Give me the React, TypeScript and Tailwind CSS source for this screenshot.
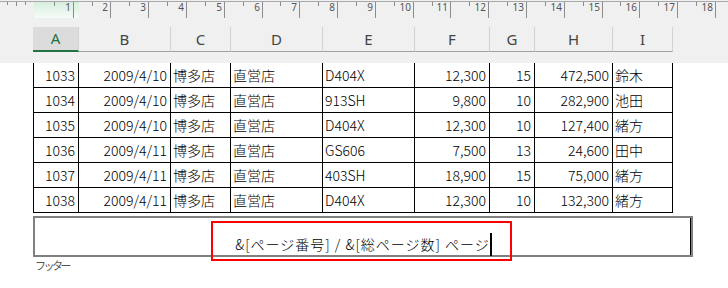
import React from 'react';

const heads = ['A', 'B', 'C', 'D', 'E', 'F', 'G', 'H', 'I'];
const headW = ['w-[46px]', 'w-[92px]', 'w-[60px]', 'w-[92px]', 'w-[92px]', 'w-[75px]', 'w-[45px]', 'w-[78px]', 'w-[60px]'];
const cellW = ['w-[45px]', 'w-[92px]', 'w-[60px]', 'w-[92px]', 'w-[92px]', 'w-[75px]', 'w-[45px]', 'w-[78px]', 'w-[60px]'];
const right = [true, true, false, false, false, true, true, true, false];

const rows = [
  ['1033', '2009/4/10', '博多店', '直営店', 'D404X', '12,300', '15', '472,500', '鈴木'],
  ['1034', '2009/4/10', '博多店', '直営店', '913SH', '9,800', '10', '282,900', '池田'],
  ['1035', '2009/4/10', '博多店', '直営店', 'D404X', '12,300', '10', '127,400', '緒方'],
  ['1036', '2009/4/11', '博多店', '直営店', 'GS606', '7,500', '13', '24,600', '田中'],
  ['1037', '2009/4/11', '博多店', '直営店', '403SH', '18,900', '15', '75,000', '緒方'],
  ['1038', '2009/4/11', '博多店', '直営店', 'D404X', '12,300', '10', '132,300', '緒方'],
];

function Ruler() {
  const zero = 34.9;
  const q = 37.78 / 4;
  const ticks: React.ReactNode[] = [];
  for (let k = -3; k <= 75; k++) {
    if (k === 0) continue;
    const x = Math.round(zero + k * q) + 0.5;
    if (x > 728) break;
    const m = ((k % 4) + 4) % 4;
    if (k > 0 && (m === 1 || m === 3)) continue;
    let y2 = 5;
    if (m === 0) y2 = 18;
    else if (m === 2) y2 = 6;
    ticks.push(<line key={'t' + k} x1={x} x2={x} y1={2} y2={y2} stroke="#8c8c8c" strokeWidth={1} />);
    if (m === 0 && k > 0) {
      const n = k / 4;
      ticks.push(
        <text key={'n' + k} x={x - 2.5} y={11} textAnchor="end" fontSize="10" fill="#555" fontFamily="'Noto Sans', sans-serif">
          {n}
        </text>
      );
    }
  }
  return (
    <svg width="728" height="19" className="block">
      <defs>
        <linearGradient id="grn" x1="0" y1="0" x2="0" y2="1">
          <stop offset="0" stopColor="#d6eedd" />
          <stop offset="1" stopColor="#f6fbf7" />
        </linearGradient>
      </defs>
      <rect x="34" y="2" width="45" height="16" fill="url(#grn)" />
      <line x1="0" x2="728" y1="1.5" y2="1.5" stroke="#a8a8a8" strokeWidth={1} />
      {ticks}
    </svg>
  );
}

export default function App() {
  return (
    <div className="relative w-[728px] h-[288px] overflow-hidden bg-white" style={{ fontFamily: "'Noto Sans CJK JP', sans-serif" }}>
      <div className="h-[63px] bg-[#f0f0f0]">
        <Ruler />
        <div className="mt-[8px] ml-[33px] flex h-[25px]" style={{ fontFamily: "'Noto Sans', sans-serif" }}>
          {heads.map((h, i) => (
            <div
              key={h}
              className={
                headW[i] +
                ' flex items-center justify-center border-r border-[#d2d2d2] text-[15px] ' +
                (i === 0
                  ? 'bg-[#dcdcdc] border-b-2 border-b-[#217346] text-[#217346]'
                  : 'border-b border-b-[#9f9f9f] text-[#444]')
              }
            >
              {h}
            </div>
          ))}
        </div>
      </div>

      <div className="ml-[33px] border-l border-black w-fit">
        {rows.map((r, ri) => (
          <div key={ri} className="flex h-[25px] border-b border-black">
            {r.map((c, ci) => (
              <div
                key={ci}
                className={
                  cellW[ci] +
                  ' flex items-center border-r border-black text-[14px] font-light text-black leading-none ' +
                  (right[ci] ? 'justify-end pr-[3px]' : 'justify-start pl-[2px]')
                }
              >
                {c}
              </div>
            ))}
          </div>
        ))}
      </div>

      <div className="ml-[33px] mt-[3px] w-[660px] h-[41px] border-2 border-[#808080]">
        <div className="h-full border-r border-black pt-[15px] flex justify-center">
          <div className="relative h-[23px] flex items-center text-[14px] font-light tracking-[1px] text-black">
            <span>&amp;[ページ番号] / &amp;[総ページ数] ページ</span>
            <div className="absolute right-[-2px] top-0 w-[2px] h-[23px] bg-black" />
          </div>
        </div>
      </div>

      <div className="ml-[35px] mt-[3px] text-[11px] leading-none tracking-[-2.5px] text-[#555]">フッター</div>

      <div className="absolute left-[211px] top-[221px] w-[301px] h-[40px] border-2 border-[#ff0000]" />
    </div>
  );
}
